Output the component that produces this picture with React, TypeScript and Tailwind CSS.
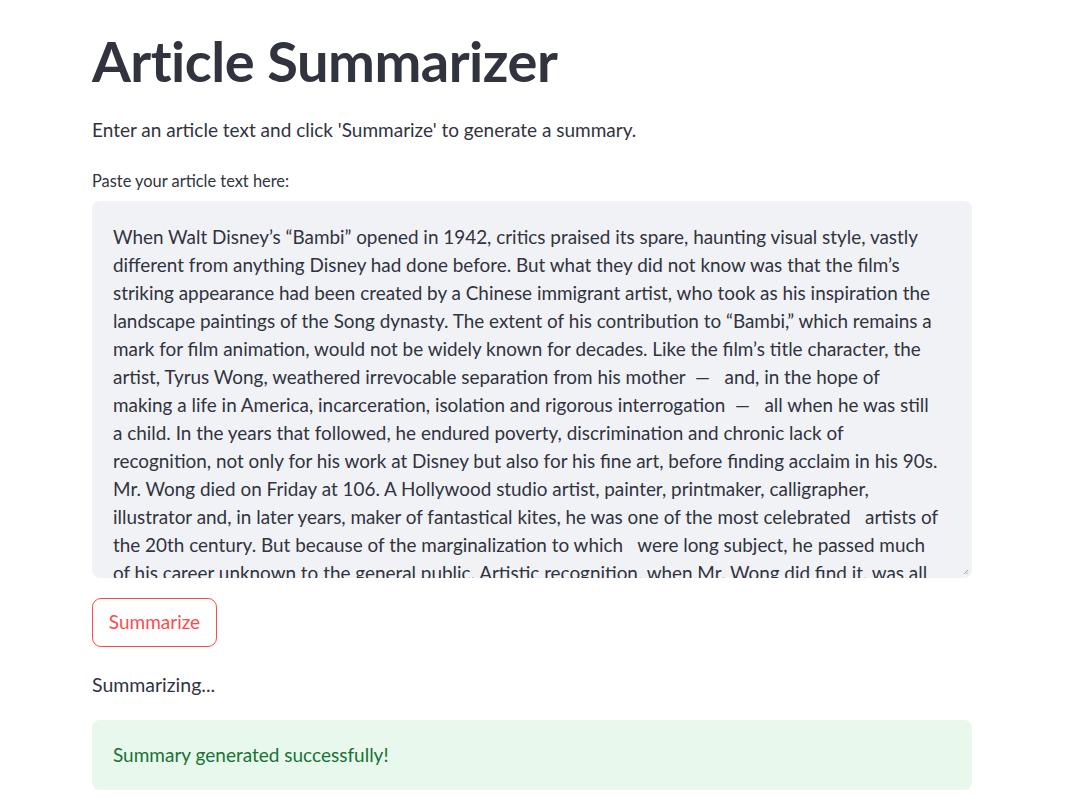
const lines = [
  "When Walt Disney’s “Bambi” opened in 1942, critics praised its spare, haunting visual style, vastly",
  "different from anything Disney had done before. But what they did not know was that the film’s",
  "striking appearance had been created by a Chinese immigrant artist, who took as his inspiration the",
  "landscape paintings of the Song dynasty. The extent of his contribution to “Bambi,” which remains a",
  "mark for film animation, would not be widely known for decades. Like the film’s title character, the",
  "artist, Tyrus Wong, weathered irrevocable separation from his mother \u00a0—\u00a0\u00a0 and, in the hope of",
  "making a life in America, incarceration, isolation and rigorous interrogation \u00a0—\u00a0\u00a0 all when he was still",
  "a child. In the years that followed, he endured poverty, discrimination and chronic lack of",
  "recognition, not only for his work at Disney but also for his fine art, before finding acclaim in his 90s.",
  "Mr. Wong died on Friday at 106. A Hollywood studio artist, painter, printmaker, calligrapher,",
  "illustrator and, in later years, maker of fantastical kites, he was one of the most celebrated \u00a0 artists of",
  "the 20th century. But because of the marginalization to which \u00a0 were long subject, he passed much",
  "of his career unknown to the general public. Artistic recognition, when Mr. Wong did find it, was all",
];

export default function App() {
  return (
    <div className="min-h-screen bg-white font-['Lato',sans-serif] text-[#31333f]">
      <div className="w-[880px] ml-[92px] flex flex-col">
        <h1 className="mt-[28px] h-[66px] text-[56px] leading-[66px] font-bold tracking-[-0.5px]">
          Article Summarizer
        </h1>
        <p className="mt-[22px] text-[19px] leading-[28px]">
          Enter an article text and click 'Summarize' to generate a summary.
        </p>
        <label className="mt-[25px] text-[16.4px] leading-[24px]">
          Paste your article text here:
        </label>
        <div className="relative mt-[8px] h-[377px] rounded-lg bg-[#f0f2f6] overflow-hidden">
          <div className="pl-[21px] pt-[22px] text-[18.9px] leading-[28px]">
            {lines.map((l, i) => (
              <div key={i} className="whitespace-nowrap">
                {l}
              </div>
            ))}
          </div>
          <svg className="absolute right-[3px] bottom-[3px]" width="6" height="6" viewBox="0 0 6 6">
            <path d="M5 1L1 5M5 3.5L3.5 5" stroke="#9ca3af" strokeWidth="1" />
          </svg>
        </div>
        <div className="mt-[20px]">
          <button
            type="button"
            className="h-[49px] w-[125px] rounded-[9px] border border-[#ff4b4b] bg-white text-[19px] text-[#ff4b4b]"
          >
            Summarize
          </button>
        </div>
        <p className="mt-[24px] text-[19.5px] leading-[28px]">Summarizing...</p>
        <div className="mt-[21px] h-[70px] rounded-lg bg-[#e8f8ed] pl-[21px] flex items-center text-[19px] text-[#177233]">
          Summary generated successfully!
        </div>
      </div>
    </div>
  );
}
